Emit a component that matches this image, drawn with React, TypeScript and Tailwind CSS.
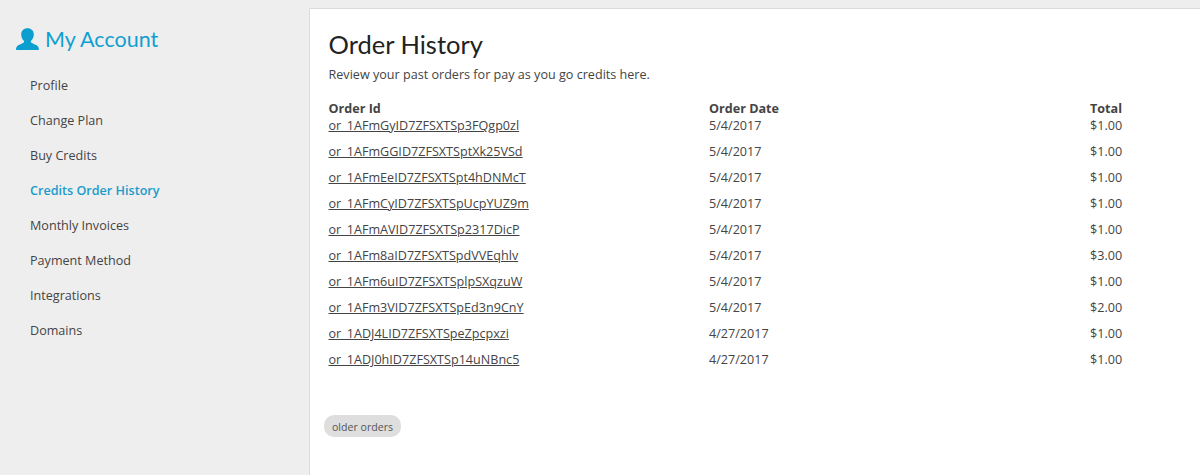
import React from "react";

const menuItems = [
  { label: "Profile" },
  { label: "Change Plan" },
  { label: "Buy Credits" },
  { label: "Credits Order History", active: true },
  { label: "Monthly Invoices" },
  { label: "Payment Method" },
  { label: "Integrations" },
  { label: "Domains" },
];

const orders = [
  ["or_1AFmGyID7ZFSXTSp3FQgp0zl", "5/4/2017", "$1.00"],
  ["or_1AFmGGID7ZFSXTSptXk25VSd", "5/4/2017", "$1.00"],
  ["or_1AFmEeID7ZFSXTSpt4hDNMcT", "5/4/2017", "$1.00"],
  ["or_1AFmCyID7ZFSXTSpUcpYUZ9m", "5/4/2017", "$1.00"],
  ["or_1AFmAVID7ZFSXTSp2317DicP", "5/4/2017", "$1.00"],
  ["or_1AFm8aID7ZFSXTSpdVVEqhlv", "5/4/2017", "$3.00"],
  ["or_1AFm6uID7ZFSXTSplpSXqzuW", "5/4/2017", "$1.00"],
  ["or_1AFm3VID7ZFSXTSpEd3n9CnY", "5/4/2017", "$2.00"],
  ["or_1ADJ4LID7ZFSXTSpeZpcpxzi", "4/27/2017", "$1.00"],
  ["or_1ADJ0hID7ZFSXTSp14uNBnc5", "4/27/2017", "$1.00"],
];

function UserIcon() {
  return (
    <svg width="23" height="23" viewBox="0 0 23 23" className="shrink-0">
      <path
        fill="#0b9fd0"
        d="M11.5 0.3c3.700 0 6.300 2.500 6.300 6 0 2.800-1.100 5-2.700 6.500-.5.500-.3 1.500.3 2 1.700 1.200 5.400 1.900 6.600 3.800.7 1.100.9 2.400.9 3.400H0c0-1 .2-2.300.9-3.400 1.200-1.900 4.900-2.600 6.600-3.800.6-.5.8-1.500.3-2-1.600-1.500-2.600-3.700-2.600-6.500 0-3.500 2.600-6 6.300-6z"
      />
    </svg>
  );
}

export default function App() {
  return (
    <div className="flex h-[475px] w-[1200px] overflow-hidden bg-[#efeeef] font-['Open_Sans',sans-serif] text-[12.6px] text-[#444]">
      <aside className="w-[309px] shrink-0 pl-4 pt-[27px]">
        <div className="flex items-center gap-[6px]">
          <UserIcon />
          <h2 className="-mt-[1px] font-['Lato',sans-serif] text-[21.5px] leading-[26px] text-[#0f9fcf]">My Account</h2>
        </div>
        <nav className="mt-[16px] flex flex-col pl-[14px]">
          {menuItems.map((item) => (
            <a
              key={item.label}
              className={`h-[35px] leading-[35px] ${item.active ? "font-semibold text-[#1a9ccb]" : ""}`}
            >
              {item.label}
            </a>
          ))}
        </nav>
      </aside>

      <main className="mt-2 flex-1 border-l border-t border-[#dcdcdc] bg-white pl-[18.5px] pt-[19px]">
        <h1 className="font-['Lato',sans-serif] text-[25.5px] leading-[32px] text-[#222]">Order History</h1>
        <p className="mt-[6px] leading-[18px]">Review your past orders for pay as you go credits here.</p>

        <div className="mt-[16px] grid grid-cols-[380.5px_381px_1fr] font-bold leading-[18px]">
          <div>Order Id</div>
          <div>Order Date</div>
          <div>Total</div>
        </div>
        <div className="-mt-[1px]">
          {orders.map(([id, date, total]) => (
            <div key={id} className="grid h-[26px] grid-cols-[380.5px_381px_1fr] leading-[18px]">
              <div>
                <a className="underline">{id}</a>
              </div>
              <div>{date}</div>
              <div>{total}</div>
            </div>
          ))}
        </div>

        <button className="-ml-[4.5px] mt-[38px] flex h-[22px] items-center rounded-[10px] bg-[#dedede] px-2 pt-[3px] text-[10.6px] text-[#555]">
          older orders
        </button>
      </main>
    </div>
  );
}
